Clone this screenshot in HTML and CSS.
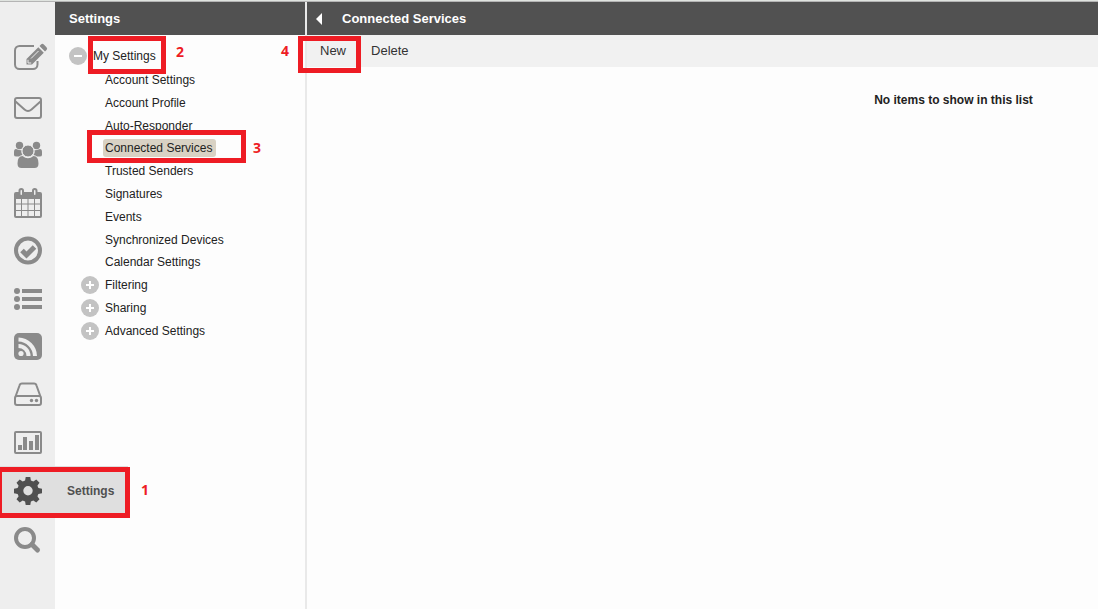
FILE: index.html
```html
<!DOCTYPE html>
<html lang="en">
<head>
<meta charset="utf-8">
<title>Settings - Connected Services</title>
<link rel="stylesheet" href="styles.css">
</head>
<body>
<div class="app">
  <nav class="rail" aria-label="Modules">
    <button class="rail-item" aria-label="Compose"><svg viewBox="0 0 36 32"><path class="line" d="M22 4H7.500a4.500 4.500 0 0 0-4.500 4.500v14A4.500 4.500 0 0 0 7.500 27H21a4.500 4.500 0 0 0 4.500-4.500V19"/><path d="M26.300 5.200l5.500 5.500L20 22.500h-5.500V17zM27.500 4l1.500-1.500a2 2 0 0 1 2.800 0l2.700 2.700a2 2 0 0 1 0 2.800L33 9.500z"/><path class="cut" d="M16 17.800v3.200h3.200M19 16.500l7.500-7.500"/></svg></button>
    <button class="rail-item" aria-label="Mail"><svg viewBox="0 0 36 32"><rect class="line" x="3" y="8" width="26" height="20" rx="2"/><path class="line" d="M3 11l9.500 8.500q3.500 3 7 0L29 11"/></svg></button>
    <button class="rail-item" aria-label="Contacts"><svg viewBox="0 0 36 32"><circle cx="7.500" cy="7.500" r="3.700"/><circle cx="24.500" cy="7.500" r="3.700"/><path d="M2 17v-3q0-3 2-3 3 1.500 5.500 1-.5 3 1 5-2 0-3.500 1.500H4.500Q2 18.500 2 17zM30 17v-3q0-3-2-3-3 1.500-5.500 1 .5 3-1 5 2 0 3.500 1.500h2.500Q30 18.500 30 17z"/><circle class="head" cx="16" cy="13" r="6"/><path d="M10.500 18q5.500 4.500 11 0 5 0 5 7.500 0 4.500-4 4.500h-13q-4 0-4-4.500 0-7.500 5-7.500z"/></svg></button>
    <button class="rail-item" aria-label="Calendar"><svg viewBox="0 0 36 32"><path fill-rule="evenodd" d="M4 6h24q2 0 2 2v22q0 2-2 2H4q-2 0-2-2V8q0-2 2-2zm0 7v4.500h5V13zm6 0v4.500h5.500V13zm6.500 0v4.500H22V13zm6.500 0v4.500h5V13zM4 18.500V24h5v-5.500zm6 0V24h5.500v-5.500zm6.500 0V24H22v-5.500zm6.500 0V24h5v-5.500zM4 25v5h5v-5zm6 0v5h5.500v-5zm6.500 0v5H22v-5zm6.500 0v5h5v-5z"/><rect class="tab" x="7.500" y="3" width="3.500" height="7" rx="1.700"/><rect class="tab" x="21" y="3" width="3.500" height="7" rx="1.700"/></svg></button>
    <button class="rail-item" aria-label="Tasks"><svg viewBox="0 0 36 32"><circle class="thick" cx="16" cy="16.500" r="12"/><path class="check" d="M10 16.500l4.500 4.500 8-8"/></svg></button>
    <button class="rail-item" aria-label="Lists"><svg viewBox="0 0 36 32"><circle cx="5" cy="9" r="3"/><circle cx="5" cy="17" r="3"/><circle cx="5" cy="25" r="3"/><path d="M10 7h20v4H10zM10 15h20v4H10zM10 23h20v4H10z"/></svg></button>
    <button class="rail-item" aria-label="News feeds"><svg viewBox="0 0 36 32"><rect x="2" y="3" width="28" height="27" rx="5"/><circle class="dot" cx="9" cy="23.500" r="2.600"/><path class="wave" d="M6.500 16a10 10 0 0 1 10 10M6.500 9.500a17 17 0 0 1 16.500 16.500"/></svg></button>
    <button class="rail-item" aria-label="Files"><svg viewBox="0 0 36 32"><path class="line" d="M3 20L7.500 7.500q.5-2 2.500-2h12q2 0 2.500 2L29 20M5 18h22q2 0 2 2v5q0 2-2 2H5q-2 0-2-2v-5q0-2 2-2z"/><circle cx="19.500" cy="22.500" r="1.700"/><circle cx="24.500" cy="22.500" r="1.700"/></svg></button>
    <button class="rail-item" aria-label="Reports"><svg viewBox="0 0 36 32"><rect class="line" x="3" y="6" width="26" height="21" rx="1"/><path d="M6 19h4v5H6zM11 11h4v13h-4zM17 15h4v9h-4zM23 9h4v15h-4z"/></svg></button>
    <button class="rail-item rail-item-active"><svg viewBox="0 0 36 32"><path fill-rule="evenodd" d="M13.700 3h4.600l.6 3.600 2.400 1 3-2.100 3.200 3.200-2.100 3 1 2.400 3.600.6v4.600l-3.600.6-1 2.400 2.100 3-3.200 3.200-3-2.100-2.400 1-.6 3.600h-4.600l-.6-3.600-2.400-1-3 2.100-3.200-3.200 2.100-3-1-2.400-3.600-.6v-4.600l3.600-.6 1-2.400-2.100-3 3.200-3.200 3 2.100 2.400-1zM16 12a4.700 4.700 0 1 0 0 9.400 4.700 4.700 0 0 0 0-9.400z"/></svg><span class="rail-label">Settings</span></button>
    <button class="rail-item" aria-label="Search"><svg viewBox="0 0 36 32"><circle class="thick" cx="13" cy="16" r="9"/><path class="handle" d="M20 22.500l5.500 5.500"/></svg></button>
  </nav>

  <aside class="panel">
    <h1 class="bar">Settings</h1>
    <ul class="tree">
      <li class="node root"><button class="toggle" aria-label="Collapse My Settings"><svg viewBox="0 0 18 18"><path d="M5 9h8"/></svg></button><a href="#">My Settings</a></li>
      <li class="node"><a href="#">Account Settings</a></li>
      <li class="node"><a href="#">Account Profile</a></li>
      <li class="node"><a href="#">Auto-Responder</a></li>
      <li class="node short selected"><a href="#">Connected Services</a></li>
      <li class="node"><a href="#">Trusted Senders</a></li>
      <li class="node"><a href="#">Signatures</a></li>
      <li class="node"><a href="#">Events</a></li>
      <li class="node"><a href="#">Synchronized Devices</a></li>
      <li class="node short"><a href="#">Calendar Settings</a></li>
      <li class="node branch"><button class="toggle" aria-label="Expand Filtering"><svg viewBox="0 0 18 18"><path d="M5 9h8M9 5v8"/></svg></button><a href="#">Filtering</a></li>
      <li class="node branch"><button class="toggle" aria-label="Expand Sharing"><svg viewBox="0 0 18 18"><path d="M5 9h8M9 5v8"/></svg></button><a href="#">Sharing</a></li>
      <li class="node branch"><button class="toggle" aria-label="Expand Advanced Settings"><svg viewBox="0 0 18 18"><path d="M5 9h8M9 5v8"/></svg></button><a href="#">Advanced Settings</a></li>
    </ul>
  </aside>

  <main class="content">
    <header class="bar content-bar"><button class="back" aria-label="Collapse panel"><svg viewBox="0 0 6 12"><path d="M6 0v12L0 6z"/></svg></button><h2>Connected Services</h2></header>
    <div class="toolbar"><button>New</button><button>Delete</button></div>
    <p class="empty">No items to show in this list</p>
  </main>

  <div class="mark mark-1"></div><span class="step step-1">1</span>
  <div class="mark mark-2"></div><span class="step step-2">2</span>
  <div class="mark mark-3"></div><span class="step step-3">3</span>
  <div class="mark mark-4"></div><span class="step step-4">4</span>
</div>
</body>
</html>
```
FILE: styles.css
```css
* { box-sizing: border-box; }
body { margin: 0; background: #fdfdfd; color: #222; font: 12px/16px "Liberation Sans", Arial, sans-serif; }
button { border: 0; padding: 0; background: none; font: inherit; color: inherit; cursor: pointer; }
a { color: inherit; text-decoration: none; }
h1, h2, p, ul { margin: 0; padding: 0; font-size: inherit; }

.app { position: relative; display: grid; grid-template-columns: 55px 250px 1fr; min-height: 100vh; padding-top: 1px; overflow: hidden; background: #fdfdfd; border-top: 1px solid #dfe3df; }
.app::before { content: ""; position: absolute; top: 0; left: 0; right: 0; height: 1px; background: #b4b4b4; }

.rail { display: flex; flex-direction: column; padding-top: 32px; background: #eee; }
.rail-item { display: flex; flex: none; align-items: center; height: 48px; padding-left: 12px; }
.rail-item svg { flex: none; width: 36px; height: 32px; fill: #8a8a8a; overflow: visible; }
.rail-item .line { fill: none; stroke: #8a8a8a; stroke-width: 2; }
.rail-item .thick { fill: none; stroke: #8a8a8a; stroke-width: 4; }
.rail-item .check { fill: none; stroke: #8a8a8a; stroke-width: 5; }
.rail-item .handle { fill: none; stroke: #8a8a8a; stroke-width: 5; stroke-linecap: round; }
.rail-item .cut { fill: none; stroke: #eee; stroke-width: 1; }
.rail-item .head { stroke: #eee; stroke-width: 1; }
.rail-item .tab { stroke: #8a8a8a; stroke-width: 2; fill: #eee; }
.rail-item .dot { fill: #eee; }
.rail-item .wave { fill: none; stroke: #eee; stroke-width: 4; }
.rail-item-active { position: relative; z-index: 1; width: 128px; background: #dfdfdf; color: #505050; font-weight: bold; }
.rail-item-active svg { fill: #505050; }
.rail-label { padding: 1px 0 0 19px; }

.bar { display: flex; align-items: center; height: 33px; padding-left: 14px; background: #515151; color: #fff; font-size: 13px; font-weight: bold; }
.tree { padding: 9px 0 0 14px; list-style: none; }
.node { display: flex; align-items: center; height: 23px; padding-left: 34px; }
.node a { padding: 1px 2px; border-radius: 3px; }
.root { height: 24px; padding-left: 0; }
.root a { padding-left: 6px; }
.branch { padding-left: 12px; }
.branch a { padding-left: 6px; }
.short { height: 22px; }
.selected a { padding-right: 4px; background: #d9d2c4; }
.toggle { width: 18px; height: 18px; border-radius: 50%; background: #c3c3c3; }
.toggle svg { display: block; stroke: #fff; stroke-width: 2; }

.content { border-left: 2px solid #e9e9e9; }
.content-bar { gap: 20px; padding-left: 9px; }
.back svg { display: block; width: 6px; height: 12px; fill: #fff; }
.toolbar { display: flex; gap: 25px; height: 32px; padding: 0 0 1px 13px; background: #f1f1f1; color: #333; font-size: 13px; }
.empty { padding: 25px 0 0 502px; text-align: center; font-weight: bold; }

.mark { position: absolute; z-index: 2; border: 5px solid #ee1c24; pointer-events: none; }
.mark-1 { top: 466px; left: -3px; width: 133px; height: 51px; }
.mark-2 { top: 35px; left: 88px; width: 78px; height: 38px; }
.mark-3 { top: 129px; left: 87px; width: 159px; height: 33px; }
.mark-4 { top: 35px; left: 298px; width: 63px; height: 37px; }
.step { position: absolute; z-index: 2; color: #ee1c24; font: bold 14px/16px "Open Sans", sans-serif; }
.step-1 { top: 481px; left: 141px; }
.step-2 { top: 43px; left: 176px; }
.step-3 { top: 139px; left: 253px; }
.step-4 { top: 42px; left: 281px; }
```
